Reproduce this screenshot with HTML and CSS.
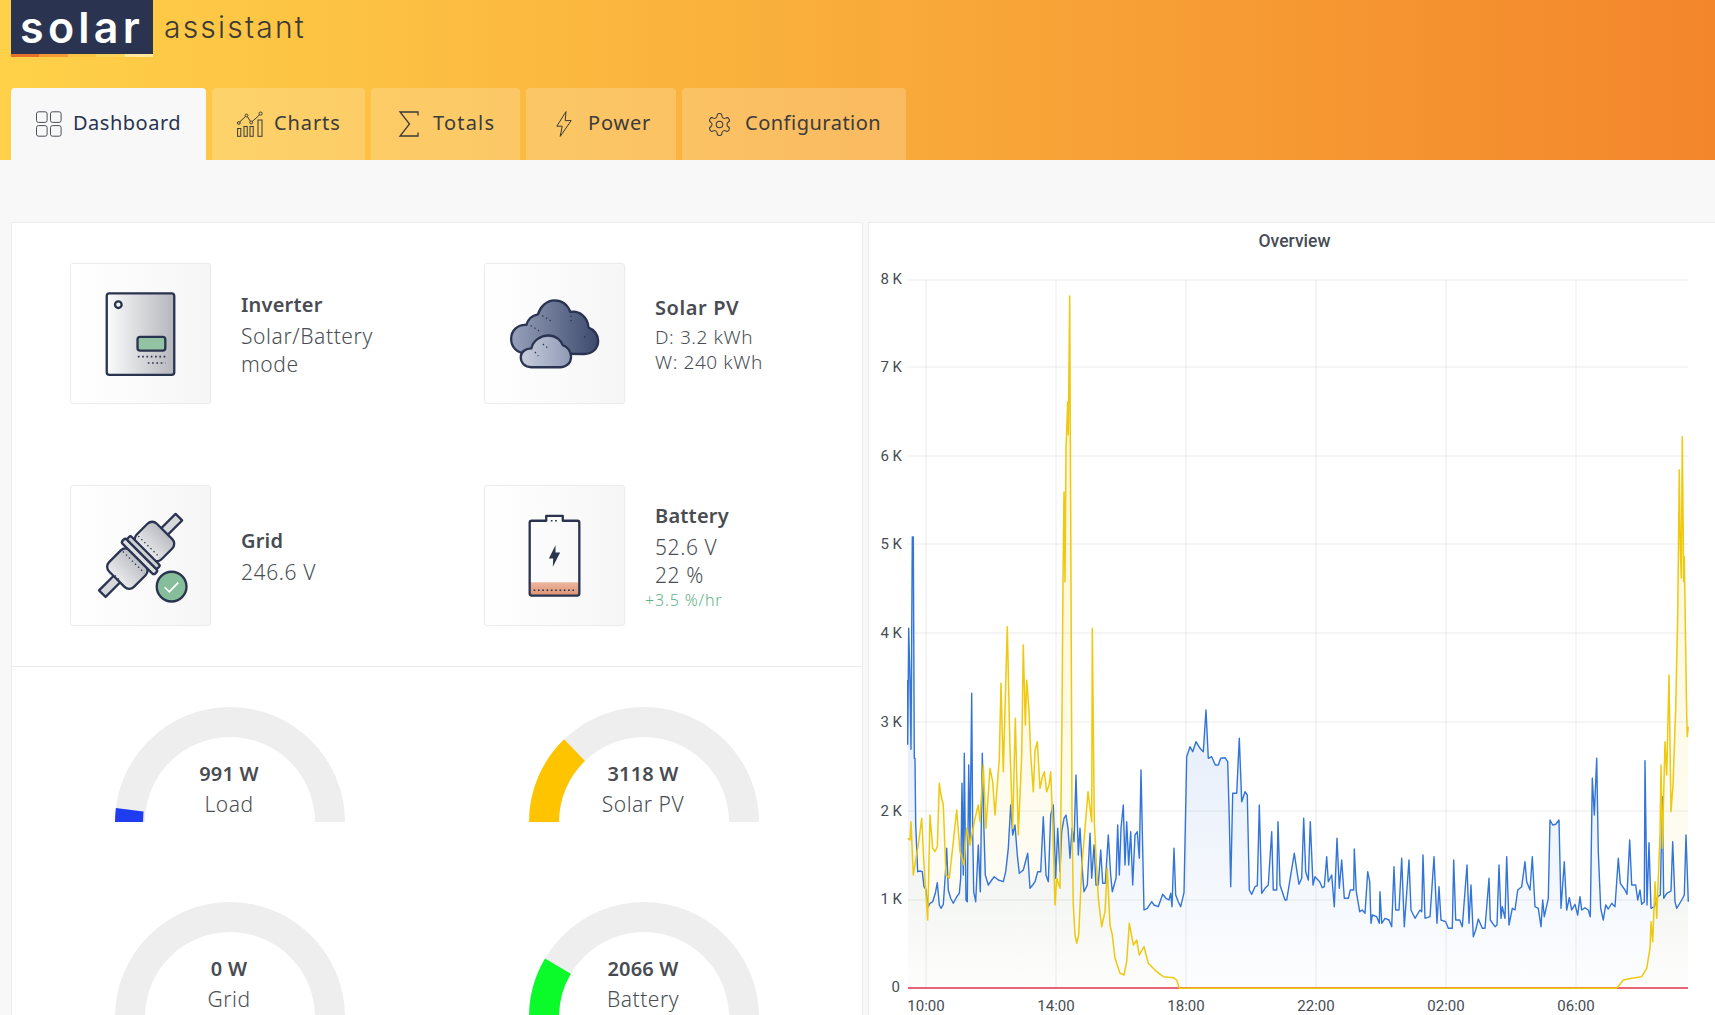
FILE: index.html
```html
<!DOCTYPE html>
<html lang="en">
<head>
<meta charset="utf-8">
<title>Solar Assistant</title>
<link rel="stylesheet" href="styles.css">
</head>
<body>
<header class="header">
  <div class="brand">
    <div class="logo"><span class="logo-word">solar</span><div class="logo-strip"><i></i><i></i><i></i><i></i><i></i></div></div>
    <span class="brand-sub">assistant</span>
  </div>
  <nav class="tabs">
    <a class="tab tab-active tab-dash">
      <svg class="tab-icon" viewBox="0 0 26 26"><rect x=".5" y=".8" width="10.6" height="10.6" rx="2"/><rect x="14.5" y=".8" width="10.6" height="10.6" rx="2"/><rect x=".5" y="14.6" width="10.6" height="10.6" rx="2"/><rect x="14.5" y="14.6" width="10.6" height="10.6" rx="2"/></svg>
      <span>Dashboard</span>
    </a>
    <a class="tab tab-charts">
      <svg class="tab-icon" viewBox="0 0 26 26"><rect x=".6" y="17.5" width="3.2" height="7.8"/><rect x="7" y="15.5" width="3.2" height="9.8"/><rect x="13" y="15.5" width="3.2" height="9.8"/><rect x="21" y="9" width="4" height="16.3"/><path d="M2.6 11 8.7 5.3M10.4 5.6 13.3 10.2M15.2 10.6 22.6 3.8"/><circle cx="1.8" cy="12" r="1.4"/><circle cx="9.5" cy="4.5" r="1.4"/><circle cx="14.2" cy="11.5" r="1.4"/><circle cx="23.6" cy="2.6" r="1.6"/></svg>
      <span>Charts</span>
    </a>
    <a class="tab tab-totals">
      <svg class="tab-icon icon-sum" viewBox="0 0 20 26"><path d="M19 4.5V1H1l9.5 12L1 25h18v-3.5"/></svg>
      <span>Totals</span>
    </a>
    <a class="tab tab-power">
      <svg class="tab-icon icon-bolt" viewBox="0 0 16 26"><path d="M10 .6 .8 15.2h5.4L4.2 25.4 15.2 9.6H9.2z"/></svg>
      <span>Power</span>
    </a>
    <a class="tab tab-config">
      <svg class="tab-icon icon-gear" viewBox="1.5 1.5 21 21"><path d="M12.22 2h-.44a2 2 0 0 0-2 2v.18a2 2 0 0 1-1 1.73l-.43.25a2 2 0 0 1-2 0l-.15-.08a2 2 0 0 0-2.73.73l-.22.38a2 2 0 0 0 .73 2.73l.15.1a2 2 0 0 1 1 1.72v.51a2 2 0 0 1-1 1.74l-.15.09a2 2 0 0 0-.73 2.73l.22.38a2 2 0 0 0 2.73.73l.15-.08a2 2 0 0 1 2 0l.43.25a2 2 0 0 1 1 1.73V20a2 2 0 0 0 2 2h.44a2 2 0 0 0 2-2v-.18a2 2 0 0 1 1-1.73l.43-.25a2 2 0 0 1 2 0l.15.08a2 2 0 0 0 2.73-.73l.22-.39a2 2 0 0 0-.73-2.73l-.15-.08a2 2 0 0 1-1-1.74v-.5a2 2 0 0 1 1-1.74l.15-.09a2 2 0 0 0 .73-2.73l-.22-.38a2 2 0 0 0-2.73-.73l-.15.08a2 2 0 0 1-2 0l-.43-.25a2 2 0 0 1-1-1.73V4a2 2 0 0 0-2-2z"/><circle cx="12" cy="12" r="3"/></svg>
      <span>Configuration</span>
    </a>
  </nav>
</header>

<main class="content">
  <section class="card card-left">
    <div class="status-grid">
      <div class="status">
        <div class="tile">
          <svg class="art" viewBox="0 0 420 420">
            <defs>
              <linearGradient id="metal"><stop offset="0" stop-color="#fbfbfb"/><stop offset="1" stop-color="#b4b7bc"/></linearGradient>
              <linearGradient id="cloudBack"><stop offset="0" stop-color="#97a1bc"/><stop offset="1" stop-color="#3d4a6c"/></linearGradient>
              <linearGradient id="cloudFront"><stop offset="0" stop-color="#c8cddb"/><stop offset="1" stop-color="#8f9ab5"/></linearGradient>
              <linearGradient id="charge" x2="0" y2="1"><stop offset="0" stop-color="#ecb69c"/><stop offset="1" stop-color="#dc9273"/></linearGradient>
            </defs>
            <rect class="ink" x="108" y="89" width="204" height="246" rx="8" fill="url(#metal)"/>
            <circle class="ink" cx="143" cy="123" r="10" fill="#f4f4f4"/>
            <rect class="ink" x="201" y="220" width="84" height="42" rx="8" fill="#92c3a3"/>
            <path class="dots" d="M202 280H285M232 299H285"/>
          </svg>
        </div>
        <div class="info">
          <div class="info-title">Inverter</div>
          <div class="info-value">Solar/Battery<br>mode</div>
        </div>
      </div>

      <div class="status">
        <div class="tile">
          <svg class="art" viewBox="45 40 420 420">
            <path class="ink" fill="url(#cloudBack)" d="M170 310C140 310 124 290 124 266 124 240 145 222 170 224 175 205 190 195 205 192 212 168 232 150 255 150 278 150 295 165 303 185 330 180 355 200 358 232 375 238 387 255 387 272 387 295 370 312 345 312Z"/>
            <path class="ink" fill="url(#cloudFront)" d="M185 352C165 352 153 338 153 322 153 305 168 295 185 295 190 272 212 256 237 256 260 256 275 272 280 285 295 290 305 305 305 320 305 340 290 352 272 352Z"/>
            <path class="dots dots-thin" d="M218 196 244 212M183 226 212 244M305 196V216M345 262 355 252M220 282 240 298M196 306 206 318"/>
          </svg>
        </div>
        <div class="info info-solar">
          <div class="info-title">Solar PV</div>
          <div class="info-value">D: 3.2 kWh<br>W: 240 kWh</div>
        </div>
      </div>

      <div class="status">
        <div class="tile">
          <svg class="art" viewBox="0 0 420 420">
            <defs><linearGradient id="metalBody"><stop offset="0" stop-color="#e9eaec"/><stop offset="1" stop-color="#b9bcc1"/></linearGradient></defs>
            <g transform="translate(212 208) rotate(-45)">
              <rect class="ink" x="95" y="-14" width="66" height="28" fill="#d7d8db"/>
              <rect class="ink" x="-166" y="-14" width="66" height="28" fill="#d7d8db"/>
              <rect class="ink" x="14" y="-53" width="86" height="106" rx="20" fill="url(#metalBody)"/>
              <rect class="ink" x="-104" y="-53" width="90" height="106" rx="20" fill="url(#metalBody)"/>
              <rect class="ink" x="-16" y="-70" width="18" height="140" rx="7" fill="#dfe0e2"/>
              <rect class="ink" x="2" y="-64" width="16" height="128" rx="6" fill="#cfd0d4"/>
              <path class="dots dots-thin" d="M34-46V46M-32-46V46M100-12V12M-100-12V12"/>
            </g>
            <circle class="ink" cx="304" cy="304" r="45" fill="#86bd9b"/>
            <path class="tick" d="M283 306 297 320 324 292"/>
          </svg>
        </div>
        <div class="info">
          <div class="info-title">Grid</div>
          <div class="info-value">246.6 V</div>
        </div>
      </div>

      <div class="status">
        <div class="tile">
          <svg class="art" viewBox="45 707 420 420">
            <rect x="182" y="998" width="146" height="40" fill="url(#charge)"/>
            <path class="ink" fill="none" d="M186 812H230V797H280V812H324Q330 812 330 818V1032Q330 1038 324 1038H186Q180 1038 180 1032V818Q180 812 186 812Z"/>
            <path class="dots" d="M192 1022H322M244 812H268"/>
            <path fill="#2a3350" d="M258 886 238 926H251L250 951 272 908H258Z"/>
          </svg>
        </div>
        <div class="info">
          <div class="info-title">Battery</div>
          <div class="info-value">52.6 V<br>22 %</div>
          <div class="info-rate">+3.5 %/hr</div>
        </div>
      </div>
    </div>

    <div class="gauge-grid">
      <div class="gauge">
        <svg class="gauge-art" viewBox="-115 -115 230 115">
          <path class="gauge-track" d="M-115 0A115 115 0 0 1 115 0H85A85 85 0 0 0-85 0Z"/>
          <path class="gauge-load" d="M-115 0A115 115 0 0 1-114.1-14L-86.5-10.4 -87 0Z"/>
        </svg>
        <div class="gauge-label"><strong>991 W</strong><span>Load</span></div>
      </div>
      <div class="gauge">
        <svg class="gauge-art" viewBox="-115 -115 230 115">
          <path class="gauge-track" d="M-115 0A115 115 0 0 1 115 0H85A85 85 0 0 0-85 0Z"/>
          <path class="gauge-solar" d="M-115 0A115 115 0 0 1-79.9-82.7L-59-61.1A85 85 0 0 0-85 0Z"/>
        </svg>
        <div class="gauge-label"><strong>3118 W</strong><span>Solar PV</span></div>
      </div>
      <div class="gauge">
        <svg class="gauge-art" viewBox="-115 -115 230 115">
          <path class="gauge-track" d="M-115 0A115 115 0 0 1 115 0H85A85 85 0 0 0-85 0Z"/>
        </svg>
        <div class="gauge-label"><strong>0 W</strong><span>Grid</span></div>
      </div>
      <div class="gauge">
        <svg class="gauge-art" viewBox="-115 -115 230 115">
          <path class="gauge-track" d="M-115 0A115 115 0 0 1 115 0H85A85 85 0 0 0-85 0Z"/>
          <path class="gauge-battery" d="M-115 0A115 115 0 0 1-99-58.5L-73.2-43.3A85 85 0 0 0-85 0Z"/>
        </svg>
        <div class="gauge-label"><strong>2066 W</strong><span>Battery</span></div>
      </div>
    </div>
  </section>

  <section class="card card-chart">
    <h2 class="chart-title">Overview</h2>
    <svg id="chart" class="chart" viewBox="869 258 846 757">
      <defs>
        <linearGradient id="fillBlue" gradientUnits="userSpaceOnUse" x1="0" y1="537" x2="0" y2="988"><stop offset="0" stop-color="#3274d9" stop-opacity=".2"/><stop offset="1" stop-color="#3274d9" stop-opacity=".01"/></linearGradient>
        <linearGradient id="fillYellow" gradientUnits="userSpaceOnUse" x1="0" y1="296" x2="0" y2="988"><stop offset="0" stop-color="#f2cc0c" stop-opacity=".22"/><stop offset="1" stop-color="#f2cc0c" stop-opacity=".01"/></linearGradient>
      </defs>
      <g class="grid-lines">
        <path d="M908 280H1688M908 367H1688M908 456H1688M908 544H1688M908 633H1688M908 722H1688M908 811H1688M908 900H1688"/>
        <path d="M926 280V988M1056 280V988M1186 280V988M1316 280V988M1446 280V988M1576 280V988"/>
      </g>
      <g class="y-axis">
        <text x="902" y="284">8 K</text><text x="902" y="372">7 K</text><text x="902" y="461">6 K</text><text x="902" y="549">5 K</text><text x="902" y="638">4 K</text><text x="902" y="727">3 K</text><text x="902" y="816">2 K</text><text x="902" y="904">1 K</text><text x="900" y="992">0</text>
      </g>
      <g class="x-axis">
        <text x="926" y="1011">10:00</text><text x="1056" y="1011">14:00</text><text x="1186" y="1011">18:00</text><text x="1316" y="1011">22:00</text><text x="1446" y="1011">02:00</text><text x="1576" y="1011">06:00</text>
      </g>
      <g id="series"></g>
    </svg>
  </section>
</main>
<script src="chart.js"></script>
</body>
</html>
```
FILE: styles.css
```css
* { box-sizing: border-box; }
html, body { margin: 0; height: 100%; overflow: hidden; }
body { background: #f8f8f8; font-family: "Noto Sans", "Open Sans", sans-serif; color: #464c54; }

.header { height: 160px; padding: 0 0 0 11px; background: linear-gradient(90deg, #ffd149 0%, #f3862b 100%); display: flex; flex-direction: column; }
.brand { height: 88px; display: flex; align-items: flex-start; gap: 11px; }
.logo { width: 142px; height: 57px; position: relative; background: #2a3350; border-radius: 0 0 3px 3px; text-align: center; }
.logo-word { display: block; font-family: Inter, sans-serif; font-weight: 600; font-size: 43px; line-height: 54px; letter-spacing: 4.2px; color: #fff; height: 54px; }
.logo-strip { position: absolute; left: 0; right: 0; bottom: 0; height: 3px; display: flex; }
.logo-strip i { flex: 1; }
.logo-strip i:nth-child(1) { background: #e8702a; }
.logo-strip i:nth-child(2) { background: #f39a36; }
.logo-strip i:nth-child(3) { background: #fbc344; }
.logo-strip i:nth-child(4) { background: #fdd55a; }
.logo-strip i:nth-child(5) { background: #ffeaa0; }
.brand-sub { font-family: Inter, sans-serif; font-weight: 300; font-size: 30px; line-height: 54px; letter-spacing: 2.2px; color: #3d3a36; }

.tabs { display: flex; gap: 6px; height: 72px; }
.tab { display: flex; align-items: center; gap: 11px; padding-left: 25px; border-radius: 4px 4px 0 0; background: rgba(255, 255, 255, .2); color: #3b3b3b; font-size: 20px; letter-spacing: .6px; }
.tab span { margin-bottom: 4px; }
.tab-active { background: #f8f8f8; color: #2a3350; }
.tab-dash { width: 195px; letter-spacing: .5px; }
.tab-charts { width: 153px; letter-spacing: .9px; }
.tab-totals { width: 149px; padding-left: 28px; gap: 14px; letter-spacing: 1.2px; }
.tab-power { width: 150px; padding-left: 30px; gap: 16px; letter-spacing: .8px; }
.tab-config { width: 224px; padding-left: 26px; gap: 14px; letter-spacing: .5px; }
.tab-icon { width: 26px; height: 26px; flex: none; fill: none; stroke: #3a3a3a; stroke-width: 1; overflow: visible; }
.tab-dash .tab-icon { stroke: #4a4f5a; }
.icon-sum { width: 20px; stroke-width: 1.3; }
.icon-bolt { width: 16px; }
.icon-gear { width: 23px; height: 23px; stroke-width: .95; }

.content { display: grid; grid-template-columns: 852px 1fr; gap: 5px; padding: 62px 0 0 11px; }
.card { background: #fff; border: 1px solid #ececec; }
.card-chart { border-right: 0; }

.status-grid { display: grid; grid-template-columns: 1fr 1fr; row-gap: 81px; padding: 40px 12px 40px 10px; border-bottom: 1px solid #ececec; }
.status { display: flex; align-items: center; gap: 30px; padding-left: 48px; }
.tile { width: 141px; height: 141px; flex: none; background: linear-gradient(90deg, #fff, #f6f6f6); border: 1px solid #ececec; border-radius: 3px; box-shadow: 0 0 2px rgba(0, 0, 0, .04); }
.art { display: block; width: 100%; height: 100%; }
.ink { stroke: #2a3350; stroke-width: 7; stroke-linejoin: round; }
.dots { fill: none; stroke: #2a3350; stroke-width: 5; stroke-dasharray: 5 8; }
.dots-thin { stroke-width: 4; stroke-dasharray: 4 9; }
.tick { fill: none; stroke: #fff; stroke-width: 5; }

.info { color: #4a4f55; font-size: 21px; line-height: 28px; font-weight: 300; padding-top: 2px; }
.info-title { font-size: 20px; font-weight: 600; color: #484c52; letter-spacing: .2px; margin-bottom: 3px; }
.info-value { letter-spacing: .6px; }
.info-solar .info-title { letter-spacing: .6px; }
.info-solar .info-value { font-size: 19px; line-height: 25px; letter-spacing: .6px; }
.info-rate { font-size: 16px; line-height: 22px; letter-spacing: .85px; color: #5fb284; margin-left: -10px; }

.gauge-grid { display: grid; grid-template-columns: 1fr 1fr; row-gap: 80px; padding: 40px 12px 0 10px; }
.gauge { position: relative; width: 230px; height: 115px; margin-left: 93px; }
.gauge-art { display: block; width: 230px; height: 115px; }
.gauge-track { fill: #eeeeee; }
.gauge-load { fill: #1f3cf0; }
.gauge-solar { fill: #ffc400; }
.gauge-battery { fill: #0afa2a; }
.gauge-label { position: absolute; left: -2px; right: 0; top: 52px; text-align: center; font-size: 21px; line-height: 30px; font-weight: 300; color: #4a4f55; letter-spacing: .5px; }
.gauge-label strong { display: block; font-size: 20px; letter-spacing: .2px; font-weight: 600; color: #484c52; }
.gauge-label span { display: block; }

.chart-title { margin: 0; height: 35px; font-family: Roboto, sans-serif; font-size: 17.5px; font-weight: 500; line-height: 36px; text-align: center; color: #464c54; padding-left: 5px; }
.chart { display: block; width: 846px; height: 757px; }
.grid-lines path { fill: none; stroke: #000; stroke-opacity: .08; stroke-width: 1; }
.y-axis text, .x-axis text { font-family: Roboto, sans-serif; font-size: 15px; fill: #464c54; }
.y-axis text { text-anchor: end; }
.x-axis text { text-anchor: middle; }
.line { fill: none; stroke-width: 1.4; stroke-linejoin: round; }
.line-blue { stroke: #3274d9; }
.line-yellow { stroke: #eec90f; stroke-width: 1.5; }
.line-red { stroke: #e0304a; stroke-width: 1.6; }
.area-blue { fill: url(#fillBlue); }
.area-yellow { fill: url(#fillYellow); }
```
FILE: chart.js
```js
// Series traced in 3x units: two panels, the second begins 1275 units later.
var blueA = [143,195,143,388,146,40,150,200,153,403,157,-234,160,-234,163,430,165,430,167,630,170,700,173,770,180,768,187,770,192,815,197,822,205,875,210,865,218,860,226,835,232,803,238,870,243,880,250,868,256,780,260,700,265,825,272,850,280,865,290,845,298,835,302,790,306,505,310,780,313,415,318,855,322,860,326,450,330,680,335,235,338,650,341,830,347,860,355,690,361,830,367,415,372,650,376,780,385,810,395,795,403,785,415,795,430,800,437,770,445,700,452,570,458,660,465,630,472,720,478,775,490,765,503,715,510,820,518,810,525,800,533,770,542,770,550,605,558,780,565,800,572,600,580,570,587,790,593,640,600,770,605,650,612,610,618,600,624,640,630,730,636,640,642,680,648,480,655,720,660,640,668,780,672,830,682,810,690,655,695,790,702,690,708,810,715,810,722,705,728,805,736,805,745,660,752,780,757,830,768,790,773,630,778,780,783,640,790,570,795,750,800,620,806,750,812,650,818,810,825,660,832,650,838,730,843,465,852,885,862,880,875,860,882,870,895,875,908,838,918,850,927,855,932,835,936,875,942,700,947,840,955,860,962,875,972,833,980,425,990,395,998,410,1008,380,1020,400,1030,410,1038,285,1045,430,1055,425,1066,450,1075,450,1082,430,1095,428,1103,440,1108,610,1112,815,1118,535,1130,535,1138,370,1145,560,1155,530,1162,540,1168,825,1175,838,1185,815,1192,812,1198,570,1205,835,1215,820,1225,810,1235,650,1240,825,1250,825,1254,620,1260,810];
var blueB = [0,855,5,855,18,775,28,715,36,770,42,808,50,790,56,610,62,770,70,795,76,620,84,810,90,785,104,800,112,818,118,815,125,725,130,800,140,780,148,875,156,670,163,820,170,735,178,850,190,850,196,825,206,825,208,702,214,830,224,890,232,885,240,895,248,770,254,800,258,925,262,900,275,905,283,925,285,830,290,925,300,910,312,915,320,935,327,755,332,885,342,885,350,730,358,935,372,735,378,885,390,910,405,885,410,890,414,720,420,910,435,905,447,725,456,925,462,815,468,915,482,920,490,940,502,940,506,735,512,915,524,915,532,935,546,750,552,925,558,810,565,965,572,945,580,912,592,940,600,940,612,790,616,915,630,935,636,930,642,750,648,910,652,875,660,910,665,725,672,930,682,880,690,885,698,825,710,815,720,740,725,800,735,825,742,725,750,875,760,880,768,935,773,855,778,905,790,850,795,615,803,630,812,628,822,615,828,880,838,740,845,885,853,848,860,885,870,868,878,900,885,845,890,885,900,878,910,885,916,905,922,490,928,600,935,430,940,710,947,880,955,915,962,870,970,882,980,865,990,875,1000,730,1006,805,1020,825,1026,838,1034,675,1040,810,1052,810,1058,855,1065,825,1070,868,1078,860,1080,437,1086,870,1092,683,1098,880,1108,875,1118,845,1126,840,1132,545,1136,850,1145,835,1158,828,1163,680,1170,860,1175,880,1190,855,1198,840,1203,660,1210,860];
var yellowA = [143,670,150,675,153,620,160,780,168,730,175,690,185,610,192,750,203,915,210,600,218,700,225,710,232,695,238,505,243,540,250,570,258,780,268,790,280,680,290,585,300,710,312,750,320,640,330,690,345,610,355,570,360,620,370,450,378,640,390,460,398,500,405,600,418,430,423,205,430,470,442,35,450,400,458,640,466,310,475,660,485,420,490,90,496,330,500,195,507,285,512,420,520,530,525,405,532,380,540,520,546,490,553,470,560,530,567,510,572,470,578,620,585,870,590,790,600,820,606,300,609,-100,612,-369,615,-100,618,-500,623,-640,625,-540,629,-957,632,-300,636,600,640,870,645,960,650,985,656,960,665,760,675,640,684,530,695,620,697,40,703,620,708,720,715,850,725,935,735,890,742,760,750,930,757,960,765,1030,780,1075,792,1080,800,1040,808,925,820,990,830,975,838,1020,852,995,865,1045,890,1070,910,1085,940,1088,950,1095,958,1120];
var yellowB = [0,1120,995,1120,1015,1095,1040,1090,1070,1085,1085,1060,1095,1000,1098,920,1103,980,1110,800,1115,910,1125,660,1128,450,1132,700,1140,380,1145,480,1152,180,1158,590,1164,510,1172,280,1178,0,1183,-435,1186,-200,1189,-111,1192,-535,1196,-100,1198,-175,1202,100,1205,300,1207,365,1210,335];

function toPage(panel, offset) {
  var out = [];
  for (var i = 0; i < panel.length; i += 2) {
    out.push((860 + (panel[i] + offset) / 3).toFixed(1) + "," + (615 + panel[i + 1] / 3).toFixed(1));
  }
  return out;
}

var NS = "http://www.w3.org/2000/svg";
var host = document.getElementById("series");

function draw(tag, points, cls) {
  var el = document.createElementNS(NS, tag);
  el.setAttribute("points", points.join(" "));
  el.setAttribute("class", cls);
  host.appendChild(el);
}

var blue = toPage(blueA, 0).concat(toPage(blueB, 1275));
var yellow = toPage(yellowA, 0).concat(toPage(yellowB, 1275));
var base = ["1688,988", "908,988"];

draw("polygon", blue.concat(base), "area-blue");
draw("polygon", yellow.concat(base), "area-yellow");
draw("polyline", base, "line line-red");
draw("polyline", blue, "line line-blue");
draw("polyline", yellow, "line line-yellow");
```
